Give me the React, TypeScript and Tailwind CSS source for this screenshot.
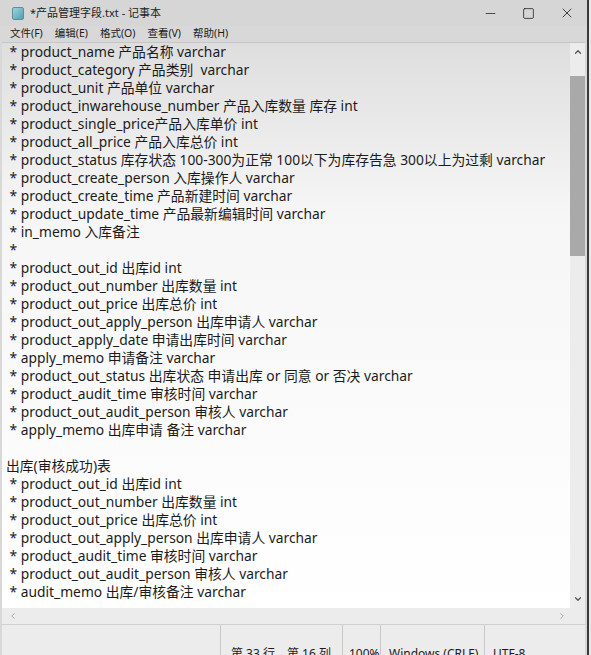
import { Minus, Square, X, ChevronUp, ChevronDown, ChevronLeft, ChevronRight } from 'lucide-react'

const lines = [
  ' * product_name 产品名称 varchar',
  ' * product_category 产品类别  varchar',
  ' * product_unit 产品单位 varchar',
  ' * product_inwarehouse_number 产品入库数量 库存 int',
  ' * product_single_price产品入库单价 int',
  ' * product_all_price 产品入库总价 int',
  ' * product_status 库存状态 100-300为正常 100以下为库存告急 300以上为过剩 varchar',
  ' * product_create_person 入库操作人 varchar',
  ' * product_create_time 产品新建时间 varchar',
  ' * product_update_time 产品最新编辑时间 varchar',
  ' * in_memo 入库备注',
  ' *',
  ' * product_out_id 出库id int',
  ' * product_out_number 出库数量 int',
  ' * product_out_price 出库总价 int',
  ' * product_out_apply_person 出库申请人 varchar',
  ' * product_apply_date 申请出库时间 varchar',
  ' * apply_memo 申请备注 varchar',
  ' * product_out_status 出库状态 申请出库 or 同意 or 否决 varchar',
  ' * product_audit_time 审核时间 varchar',
  ' * product_out_audit_person 审核人 varchar',
  ' * apply_memo 出库申请 备注 varchar',
  '',
  '出库(审核成功)表',
  ' * product_out_id 出库id int',
  ' * product_out_number 出库数量 int',
  ' * product_out_price 出库总价 int',
  ' * product_out_apply_person 出库申请人 varchar',
  ' * product_audit_time 审核时间 varchar',
  ' * product_out_audit_person 审核人 varchar',
  ' * audit_memo 出库/审核备注 varchar'
]

const menus = ['文件(F)', '编辑(E)', '格式(O)', '查看(V)', '帮助(H)']

export default function App() {
  return (
    <div
      className="w-[591px] h-[655px] overflow-hidden flex bg-[#d8d8d8] text-[#1b1b1b]"
      style={{ fontFamily: '"Noto Sans", "Noto Sans CJK SC", sans-serif' }}
    >
      <div className="flex-1 flex flex-col min-w-0">
        {/* Title bar */}
        <div className="h-[26px] flex items-center bg-[#d6d6d6]">
          <div className="ml-[12px] w-[12px] h-[13px] rounded-[2px] bg-gradient-to-br from-[#9fd3de] to-[#4f9fb3] border border-[#5b8f9c]" />
          <span className="ml-[6px] text-[11px] text-[#222]">*产品管理字段.txt - 记事本</span>
          <div className="ml-auto flex items-center h-full">
            <div className="w-[38px] flex justify-center"><Minus size={15} strokeWidth={1.2} /></div>
            <div className="w-[38px] flex justify-center"><Square size={13} strokeWidth={1.4} /></div>
            <div className="w-[40px] flex justify-center"><X size={16} strokeWidth={1.2} /></div>
          </div>
        </div>

        {/* Menu bar */}
        <div className="h-[15px] flex items-center gap-[12px] pl-[10px] text-[10.5px] bg-[#d8d8d8]">
          {menus.map((m) => (
            <span key={m}>{m}</span>
          ))}
        </div>

        {/* Editor */}
        <div className="mt-[1px] mx-[2px] flex-1 flex flex-col border-t border-[#c6c6c6] min-h-0">
          <div className="flex-1 flex min-h-0">
            <div className="flex-1 bg-gradient-to-b from-[#dedede] via-[#f6f6f6] via-30% to-white pl-[4px] overflow-hidden">
              {lines.map((l, i) => (
                <div key={i} className="h-[18px] leading-[18px] text-[13.8px] whitespace-pre">
                  {l}
                </div>
              ))}
            </div>
            {/* Vertical scrollbar */}
            <div className="w-[15px] flex flex-col bg-[#ececec]">
              <div className="h-[18px] flex items-center justify-center text-[#555]">
                <ChevronUp size={10} strokeWidth={3} />
              </div>
              <div className="mt-[15px] h-[180px] bg-[#a9a9a9]" />
              <div className="flex-1" />
              <div className="h-[18px] flex items-center justify-center text-[#555]">
                <ChevronDown size={10} strokeWidth={3} />
              </div>
            </div>
          </div>
          {/* Horizontal scrollbar */}
          <div className="h-[16px] flex items-center justify-between px-[6px] bg-[#ececec] text-[#999]">
            <ChevronLeft size={10} strokeWidth={2} />
            <ChevronRight size={10} strokeWidth={2} className="mr-[12px]" />
          </div>
        </div>

        {/* Status bar */}
        <div className="h-[31px] flex items-start bg-[#ececec] border-t border-[#d0d0d0] text-[12px] mx-[2px]">
          <div className="w-[218px]" />
          <div className="h-full border-l border-[#c9c9c9] pl-[10px] pt-[20px] w-[122px]">第 33 行，第 16 列</div>
          <div className="h-full border-l border-[#c9c9c9] pl-[6px] pt-[20px] w-[38px]">100%</div>
          <div className="h-full border-l border-[#c9c9c9] pl-[8px] pt-[20px] w-[104px]">Windows (CRLF)</div>
          <div className="h-full border-l border-[#c9c9c9] pl-[8px] pt-[20px]">UTF-8</div>
        </div>
      </div>

      {/* Edge of neighbouring window */}
      <div className="w-[2px] bg-[#3a3a3a]" />
      <div className="w-[2px] bg-[#e8e8e8]" />
    </div>
  )
}
